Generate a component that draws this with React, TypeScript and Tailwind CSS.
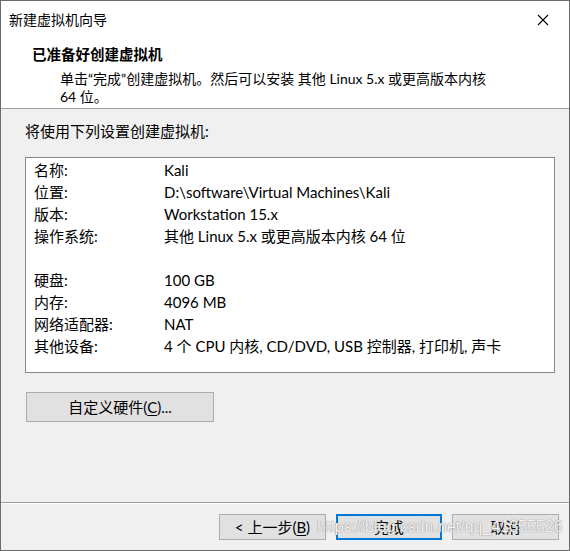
import React from "react";

const FONT = { fontFamily: 'Lato, "Noto Sans CJK SC", sans-serif' };

const rows: ([string, string] | null)[] = [
  ["名称:", "Kali"],
  ["位置:", "D:\\software\\Virtual Machines\\Kali"],
  ["版本:", "Workstation 15.x"],
  ["操作系统:", "其他 Linux 5.x 或更高版本内核 64 位"],
  null,
  ["硬盘:", "100 GB"],
  ["内存:", "4096 MB"],
  ["网络适配器:", "NAT"],
  ["其他设备:", "4 个 CPU 内核, CD/DVD, USB 控制器, 打印机, 声卡"],
];

export default function App() {
  return (
    <div
      className="relative w-[570px] h-[551px] border border-[#6b6b6b] flex flex-col text-[15px] text-black bg-[#f0f0f0] overflow-hidden"
      style={FONT}
    >
      {/* Title bar */}
      <div className="h-[37px] bg-white flex items-center pl-[8px] pr-[15px] justify-between shrink-0">
        <span className="leading-[20px] text-[14px]">新建虚拟机向导</span>
        <svg width="12" height="12" viewBox="0 0 12 12" className="mr-[5px]">
          <path d="M1 1 L11 11 M11 1 L1 11" stroke="#000" strokeWidth="1.1" fill="none" />
        </svg>
      </div>
      {/* Header */}
      <div className="h-[71px] bg-white border-b border-[#a0a0a0] pl-[31px] pt-[7px] shrink-0">
        <div className="font-bold leading-[20px] text-[14.5px]">已准备好创建虚拟机</div>
        <div className="pl-[28px] mt-[5px] leading-[18px] whitespace-nowrap text-[14px]">
          单击“完成”创建虚拟机。然后可以安装 其他 Linux 5.x 或更高版本内核
          <br />
          64 位。
        </div>
      </div>
      {/* Body */}
      <div className="flex-1 flex flex-col pt-[12px]">
        <div className="pl-[24px] leading-[20px]">将使用下列设置创建虚拟机:</div>
        <div className="ml-[24px] mt-[16px] w-[530px] h-[216px] bg-white border border-[#828790] pt-[1px] pl-[8px]">
          {rows.map((r, i) =>
            r ? (
              <div key={i} className="flex h-[22px] items-center">
                <span className="w-[130px] shrink-0">{r[0]}</span>
                <span className="whitespace-nowrap">{r[1]}</span>
              </div>
            ) : (
              <div key={i} className="h-[22px]" />
            )
          )}
        </div>
        <div className="ml-[25px] mt-[19px] w-[188px] h-[30px] bg-[#e1e1e1] border border-[#adadad] flex items-center justify-center">
          <span>
            自定义硬件(<span className="underline underline-offset-2">C</span>)...
          </span>
        </div>
      </div>
      {/* Footer */}
      <div className="h-[48px] shrink-0 border-t border-[#a0a0a0] shadow-[inset_0_1px_0_#ffffff] pt-[11px] pr-[10px] flex justify-end gap-[10px]">
        <div className="w-[107px] h-[26px] bg-[#e1e1e1] border border-[#adadad] flex items-center justify-center">
          <span>
            &lt; 上一步(<span className="underline underline-offset-2">B</span>)
          </span>
        </div>
        <div className="w-[106px] h-[26px] bg-[#e1e1e1] border-2 border-[#0078d7] flex items-center justify-center">
          完成
        </div>
        <div className="w-[107px] h-[26px] bg-[#e1e1e1] border border-[#adadad] flex items-center justify-center">
          取消
        </div>
      </div>
      {/* Watermark */}
      <div
        className="absolute left-[316px] top-[516px] text-[16px] leading-[20px] text-white/90 whitespace-nowrap [text-shadow:0_0_1px_#8a8a8a,0_0_1px_#8a8a8a]"
        style={{ fontFamily: '"Liberation Sans", Arial, sans-serif' }}
      >
        https://blog.csdn.net/qq_41355526
      </div>
    </div>
  );
}
